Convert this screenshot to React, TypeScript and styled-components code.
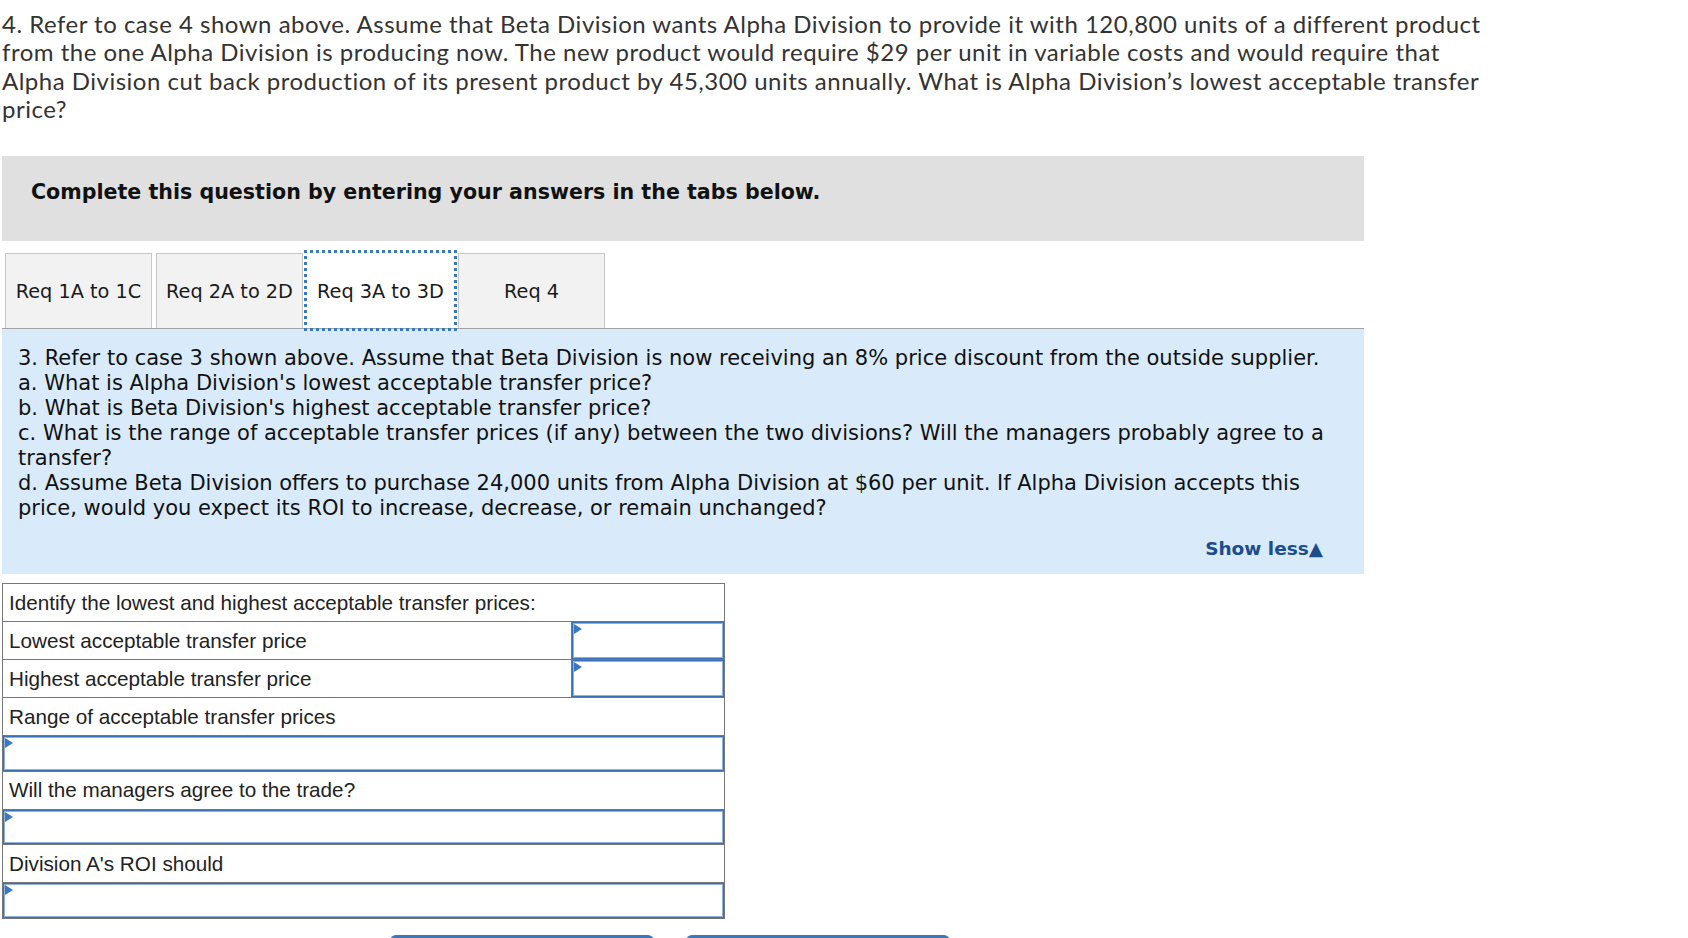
import React from 'react';
import styled, { createGlobalStyle } from 'styled-components';

const GlobalStyle = createGlobalStyle`
    html, body {
        margin: 0;
        padding: 0;
        background: #ffffff;
        overflow: hidden;
    }
    * {
        box-sizing: border-box;
    }
`;

const Page = styled.div`
    width: 1688px;
    height: 938px;
    overflow: hidden;
    padding-left: 2px;
`;

const Intro = styled.p`
    margin: 0;
    padding-top: 10px;
    font-family: Lato, 'Open Sans', sans-serif;
    font-size: 24px;
    letter-spacing: 0.5px;
    line-height: 28.3px;
    color: #333333;
    white-space: nowrap;
`;

const Prompt = styled.div`
    margin-top: 33px;
    width: 1362px;
    height: 85px;
    background: #e0e0e0;
    padding: 23px 0 0 29px;
    font-family: 'DejaVu Sans', Verdana, sans-serif;
    font-weight: bold;
    font-size: 20.6px;
    line-height: 26px;
    color: #111111;
`;

const TabBar = styled.div`
    display: flex;
    gap: 4px;
    margin-top: 12px;
    padding-left: 3px;
    align-items: flex-end;
`;

const Tab = styled.div<{ $active?: boolean }>`
    width: 147px;
    height: 75px;
    display: flex;
    align-items: center;
    justify-content: center;
    font-family: 'DejaVu Sans', Verdana, sans-serif;
    font-size: 19.3px;
    color: #1a1a1a;
    white-space: nowrap;
    background: ${(p) => (p.$active ? '#ffffff' : '#f2f2f2')};
    border: 1px solid ${(p) => (p.$active ? '#ffffff' : '#c8c8c8')};
    border-bottom: none;
    outline: ${(p) => (p.$active ? '3px dotted #3b78c2' : 'none')};
    position: relative;
    z-index: ${(p) => (p.$active ? 2 : 1)};
`;

const Panel = styled.div`
    width: 1362px;
    background: #d9ebfa;
    border-top: 1px solid #a3a3a3;
    padding: 17px 41px 13px 16px;
    font-family: 'DejaVu Sans', Verdana, sans-serif;
    font-size: 21px;
    line-height: 25px;
    color: #111111;
`;

const PanelText = styled.div`
    white-space: nowrap;
`;

const ShowLess = styled.div`
    margin-top: 15px;
    text-align: right;
    font-weight: bold;
    font-size: 18.5px;
    color: #1c4d8c;
`;

const Grid = styled.table`
    margin-top: 9px;
    width: 723px;
    border-collapse: collapse;
    font-family: 'Liberation Sans', Arial, sans-serif;
    font-size: 20.7px;
    color: #222222;
`;

const Cell = styled.td`
    border: 1px solid #777777;
    height: 38px;
    padding: 0 0 0 6px;
    vertical-align: middle;
    white-space: nowrap;
`;

const InputCell = styled.td<{ $short?: boolean }>`
    border: 1px solid #777777;
    height: ${(p) => (p.$short ? '35.5px' : '38px')};
    padding: 0;
    width: ${(p) => (p.$short ? 'auto' : '153px')};
`;

const AnswerBox = styled.div`
    position: relative;
    height: 100%;
    min-height: inherit;
    border: 1px solid #3a70b5;
    box-shadow: inset 0 0 0 1px #8fb3e0;
    background: #ffffff;
    &::before {
        content: '';
        position: absolute;
        top: 1px;
        left: 1px;
        border-left: 8px solid #3a78c2;
        border-top: 5px solid transparent;
        border-bottom: 5px solid transparent;
    }
`;

const NavRow = styled.div`
    display: flex;
    gap: 32px;
    margin-top: 16px;
    padding-left: 388px;
`;

const NavButton = styled.button`
    width: 264px;
    height: 44px;
    border: none;
    border-radius: 6px;
    background: #3a77bd;
`;

const rows: { label: string; kind: 'side' | 'below' }[] = [
    { label: 'Lowest acceptable transfer price', kind: 'side' },
    { label: 'Highest acceptable transfer price', kind: 'side' },
    { label: 'Range of acceptable transfer prices', kind: 'below' },
    { label: 'Will the managers agree to the trade?', kind: 'below' },
    { label: "Division A's ROI should", kind: 'below' },
];

const tabs = ['Req 1A to 1C', 'Req 2A to 2D', 'Req 3A to 3D', 'Req 4'];

export default function App() {
    return (
        <Page>
            <GlobalStyle />
            <Intro>
                4. Refer to case 4 shown above. Assume that Beta Division wants Alpha Division to provide it with 120,800 units of a different product
                <br />
                from the one Alpha Division is producing now. The new product would require $29 per unit in variable costs and would require that
                <br />
                Alpha Division cut back production of its present product by 45,300 units annually. What is Alpha Division’s lowest acceptable transfer
                <br />
                price?
            </Intro>

            <Prompt>Complete this question by entering your answers in the tabs below.</Prompt>

            <TabBar>
                {tabs.map((t) => (
                    <Tab key={t} $active={t === 'Req 3A to 3D'}>
                        {t}
                    </Tab>
                ))}
            </TabBar>

            <Panel>
                <PanelText>
                    3. Refer to case 3 shown above. Assume that Beta Division is now receiving an 8% price discount from the outside supplier.
                    <br />
                    a. What is Alpha Division's lowest acceptable transfer price?
                    <br />
                    b. What is Beta Division's highest acceptable transfer price?
                    <br />
                    c. What is the range of acceptable transfer prices (if any) between the two divisions? Will the managers probably agree to a
                    <br />
                    transfer?
                    <br />
                    d. Assume Beta Division offers to purchase 24,000 units from Alpha Division at $60 per unit. If Alpha Division accepts this
                    <br />
                    price, would you expect its ROI to increase, decrease, or remain unchanged?
                </PanelText>
                <ShowLess>Show less▲</ShowLess>
            </Panel>

            <Grid>
                <tbody>
                    <tr>
                        <Cell colSpan={2}>Identify the lowest and highest acceptable transfer prices:</Cell>
                    </tr>
                    {rows.map((r) =>
                        r.kind === 'side' ? (
                            <tr key={r.label}>
                                <Cell>{r.label}</Cell>
                                <InputCell>
                                    <AnswerBox />
                                </InputCell>
                            </tr>
                        ) : (
                            <React.Fragment key={r.label}>
                                <tr>
                                    <Cell colSpan={2}>{r.label}</Cell>
                                </tr>
                                <tr>
                                    <InputCell colSpan={2} $short>
                                        <AnswerBox />
                                    </InputCell>
                                </tr>
                            </React.Fragment>
                        )
                    )}
                </tbody>
            </Grid>

            <NavRow>
                <NavButton aria-label="Previous: Req 3A to 3D" />
                <NavButton aria-label="Next: Req 4" />
            </NavRow>
        </Page>
    );
}
